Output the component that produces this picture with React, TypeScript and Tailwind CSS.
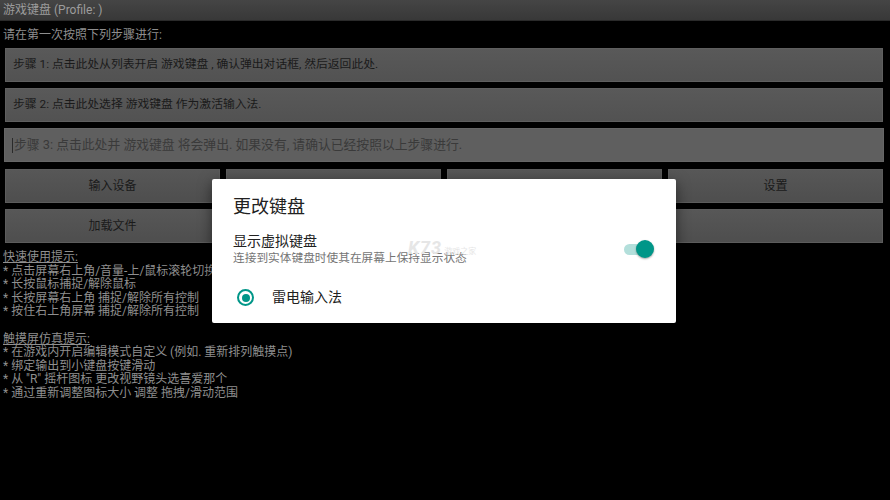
const font = { fontFamily: 'Roboto, "Noto Sans CJK SC", sans-serif' };

const quickTips = [
  '* 点击屏幕右上角/音量-上/鼠标滚轮切换',
  '* 长按鼠标捕捉/解除鼠标',
  '* 长按屏幕右上角 捕捉/解除所有控制',
  '* 按住右上角屏幕 捕捉/解除所有控制',
];

const touchTips = [
  '* 在游戏内开启编辑模式自定义 (例如. 重新排列触摸点)',
  '* 绑定输出到小键盘按键滑动',
  '* 从 "R" 摇杆图标 更改视野镜头选喜爱那个',
  '* 通过重新调整图标大小 调整 拖拽/滑动范围',
];

const StepButton = ({ children }: { children: React.ReactNode }) => (
  <div className="h-[34px] flex items-center px-[7px] bg-gradient-to-b from-[#595959] to-[#525252] border border-[#5f5f5f] text-[11.8px] text-[#1a1a1a]">
    {children}
  </div>
);

const GridButton = ({ label }: { label?: string }) => (
  <div className="h-[34px] flex items-center justify-center bg-gradient-to-b from-[#575757] to-[#4e4e4e] border border-[#5c5c5c] text-[12px] text-[#1a1a1a]">
    {label}
  </div>
);

const App = () => {
  return (
    <div className="relative w-[890px] h-[500px] bg-black overflow-hidden" style={font}>
      {/* title bar */}
      <div className="h-[21px] flex items-center px-[3px] bg-gradient-to-b from-[#454545] to-[#383838] border-b border-[#2a2a2a] text-[12px] text-[#9c9c9c]">
        游戏键盘 (Profile: )
      </div>

      <div className="pt-[6px] pl-[3px] text-[12px] text-[#8e8e8e] leading-[16px]">请在第一次按照下列步骤进行:</div>

      <div className="flex flex-col gap-[6px] pl-[5px] pr-[7px] pt-[5px]">
        <StepButton>步骤 1: 点击此处从列表开启 游戏键盘 , 确认弹出对话框, 然后返回此处.</StepButton>
        <StepButton>步骤 2: 点击此处选择 游戏键盘 作为激活输入法.</StepButton>
        {/* text field with cursor */}
        <div className="-ml-[1px] -mr-[1px] h-[34px] flex items-center px-[7px] bg-[#5f5f5f] border border-[#666] text-[12.8px] text-[#3a3a3a]">
          <span className="w-[1px] h-[15px] bg-[#2a2a2a] mr-[1px]" />
          步骤 3: 点击此处并 游戏键盘 将会弹出. 如果没有, 请确认已经按照以上步骤进行.
        </div>
        <div className="mt-[1px] grid grid-cols-4 gap-x-[6px] gap-y-[6px]">
          <GridButton label="输入设备" />
          <GridButton />
          <GridButton />
          <GridButton label="设置" />
          <GridButton label="加载文件" />
          <GridButton />
          <GridButton />
          <GridButton />
        </div>
      </div>

      <div className="pl-[3px] pt-[8px] text-[12px] leading-[13.6px] text-[#8f8f8f]">
        <div className="underline">快速使用提示:</div>
        {quickTips.map((t) => (
          <div key={t}>{t}</div>
        ))}
        <div className="h-[13.6px]" />
        <div className="underline">触摸屏仿真提示:</div>
        {touchTips.map((t) => (
          <div key={t}>{t}</div>
        ))}
      </div>

      {/* keyboard dialog */}
      <div className="absolute left-[212px] top-[179px] w-[464px] h-[144px] bg-white rounded-[2px] shadow-[0_4px_14px_rgba(0,0,0,0.5)] pl-[21px] pr-[22px] pt-[16px]">
        <div className="text-[18px] leading-[24px] text-[#212121]">更改键盘</div>
        <div className="mt-[13px] flex items-center justify-between">
          <div>
            <div className="text-[14px] leading-[18px] text-[#212121]">显示虚拟键盘</div>
            <div className="text-[11.7px] leading-[16px] text-[#757575]">连接到实体键盘时使其在屏幕上保持显示状态</div>
          </div>
          <div className="relative w-[32px] h-[20px] flex items-center">
            <div className="w-[26px] h-[11px] ml-[2px] rounded-full bg-[#b3dfdb]" />
            <div className="absolute right-0 top-[1px] w-[18px] h-[18px] rounded-full bg-[#009688] shadow-[0_1px_2px_rgba(0,0,0,0.35)]" />
          </div>
        </div>
        <div className="mt-[21px] flex items-center">
          <div className="w-[17px] h-[17px] ml-[4px] rounded-full border-[2px] border-[#009688] flex items-center justify-center">
            <div className="w-[8px] h-[8px] rounded-full bg-[#009688]" />
          </div>
          <span className="ml-[18px] text-[14px] text-[#212121]">雷电输入法</span>
        </div>
        {/* faint watermark */}
        <div className="absolute left-[196px] top-[60px] flex items-end gap-[2px] text-[#e6e6e6] select-none pointer-events-none">
          <span className="text-[18px] italic font-bold leading-[18px] tracking-[1px]">K73</span>
          <span className="text-[8px] leading-[10px]">游戏之家</span>
        </div>
      </div>
    </div>
  );
};

export default App;
